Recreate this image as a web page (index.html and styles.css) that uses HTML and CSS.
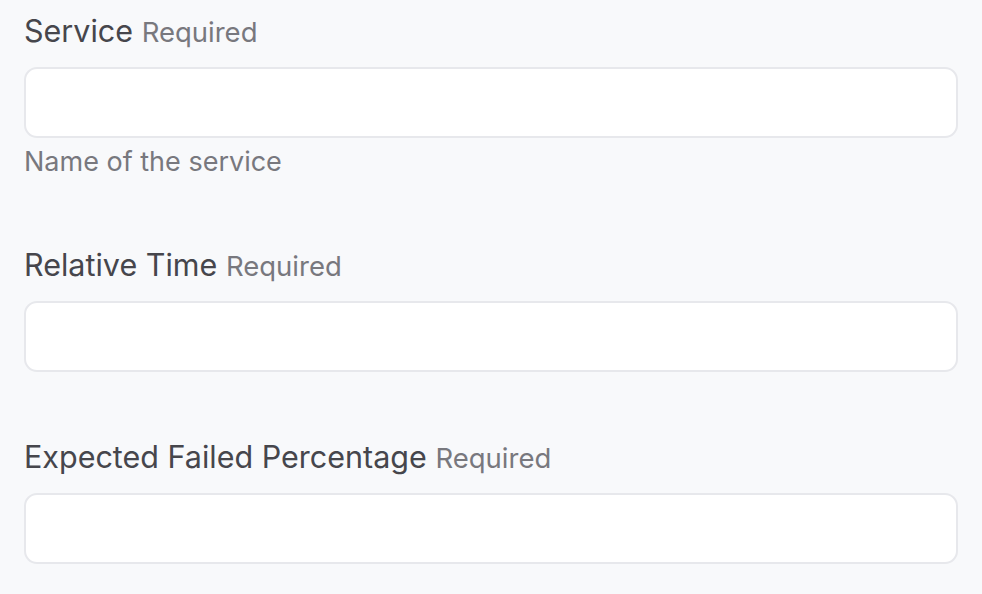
FILE: index.html
```html
<!DOCTYPE html>
<html>
<head>
<meta charset="utf-8">
<link rel="stylesheet" href="styles.css">
</head>
<body>
<form class="form">
  <div class="field">
    <label class="label">Service <span class="req">Required</span></label>
    <input class="input" type="text">
    <div class="help">Name of the service</div>
  </div>
  <div class="field">
    <label class="label">Relative Time <span class="req">Required</span></label>
    <input class="input" type="text">
  </div>
  <div class="field">
    <label class="label">Expected Failed Percentage <span class="req">Required</span></label>
    <input class="input" type="text">
  </div>
</form>
</body>
</html>
```
FILE: styles.css
```css
html, body {
  margin: 0;
  padding: 0;
  background: #f8f9fb;
  font-family: Inter, "Liberation Sans", sans-serif;
}
.form {
  padding: 11px 24px 0 24px;
  display: flex;
  flex-direction: column;
  gap: 65px;
}
.field {
  display: flex;
  flex-direction: column;
}
.label {
  display: block;
  height: 40px;
  font-size: 30.5px;
  line-height: 40px;
  color: #46464c;
  margin-bottom: 16px;
  white-space: nowrap;
}
.req {
  font-size: 27.5px;
  line-height: 1;
  color: #78787e;
}
.input {
  box-sizing: border-box;
  height: 71px;
  width: 100%;
  border: 2px solid #e7e8ec;
  border-radius: 13px;
  background: #ffffff;
  margin: 0;
}
.help {
  font-size: 27px;
  line-height: 36px;
  padding-top: 6px;
  color: #78787e;
}
```
